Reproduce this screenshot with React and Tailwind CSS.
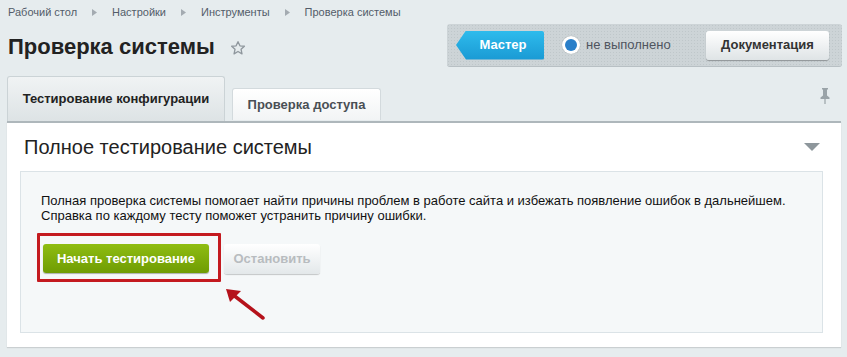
import React from 'react';

function Crumb({ children, last }) {
  return (
    <>
      <span className="text-[#535c69]">{children}</span>
      {!last && (
        <svg width="5" height="7" viewBox="0 0 5 7" className="mx-[15px]">
          <path d="M0 0 L5 3.5 L0 7 Z" fill="#a4abb1" />
        </svg>
      )}
    </>
  );
}

export default function App() {
  return (
    <div
      className="w-[847px] h-[357px] bg-[#e6ecee] overflow-hidden relative"
      style={{ fontFamily: '"Liberation Sans", Arial, sans-serif' }}
    >
      {/* breadcrumbs */}
      <div className="flex items-center pl-[8px] pt-[5px] h-[19px] text-[11px]">
        <Crumb>Рабочий стол</Crumb>
        <Crumb>Настройки</Crumb>
        <Crumb>Инструменты</Crumb>
        <Crumb last>Проверка системы</Crumb>
      </div>

      {/* title row */}
      <div className="flex items-start justify-between pl-[8px] pr-[5px] h-[57px]">
        <div className="flex items-center pt-[15px]">
          <h1 className="text-[22px] font-bold text-[#222] leading-[26px]">Проверка системы</h1>
          <svg width="16" height="16" viewBox="0 0 24 24" className="ml-[15px] mt-[1px]">
            <path
              d="M12 2.5l2.9 6.2 6.7.7-5 4.6 1.4 6.7L12 17.3l-5.9 3.4 1.4-6.7-5-4.6 6.7-.7z"
              fill="none"
              stroke="#8f979d"
              strokeWidth="2"
              strokeLinejoin="round"
            />
          </svg>
        </div>
        <div className="mt-[5px] w-[395px] h-[43px] rounded-[3px] bg-[#cdd4d7] border-b border-[#b8c0c4] flex items-center pl-[9px] pr-[13px]"
          style={{ backgroundImage: 'radial-gradient(#bfc7ca 1px, transparent 1px)', backgroundSize: '3px 3px' }}
        >
          <div className="relative h-[29px] w-[88px] flex items-center justify-center text-white font-bold text-[13px] rounded-r-[2px] bg-gradient-to-b from-[#2ebbec] to-[#1a9ad4] shadow-[0_1px_1px_rgba(0,0,0,0.25)]"
            style={{ clipPath: 'polygon(10px 0, 100% 0, 100% 100%, 10px 100%, 0 50%)' }}
          >
            <span className="pl-[6px]">Мастер</span>
          </div>
          <div className="ml-[18px] w-[18px] h-[18px] rounded-full bg-white flex items-center justify-center shadow-[0_0_1px_rgba(0,0,0,0.3)]">
            <div className="w-[12px] h-[12px] rounded-full bg-[#2a7fc9]" />
          </div>
          <span className="ml-[6px] text-[13px] text-[#4f5560]">не выполнено</span>
          <div className="ml-auto h-[29px] w-[123px] rounded-[3px] bg-gradient-to-b from-white to-[#dfe4e6] shadow-[0_1px_1px_rgba(0,0,0,0.3)] flex items-center justify-center text-[13px] font-bold text-[#333]">
            Документация
          </div>
        </div>
      </div>

      {/* tabs */}
      <div className="flex items-end pl-[7px] pr-[5px] h-[45px] relative">
        <div className="w-[218px] h-[45px] rounded-t-[3px] border border-b-0 border-[#cbd3d6] bg-gradient-to-b from-[#f0f3f4] to-[#dde3e5] flex items-center justify-center text-[13px] font-bold text-[#222]">
          Тестирование конфигурации
        </div>
        <div className="ml-[7px] mb-[1px] w-[149px] h-[32px] rounded-t-[3px] border border-b-0 border-[#d3dadd] bg-gradient-to-b from-white to-[#f2f4f5] flex items-center justify-center text-[13px] font-bold text-[#4a4f55]">
          Проверка доступа
        </div>
        <svg width="10" height="16" viewBox="0 0 10 16" className="absolute right-[17px] top-[12px]">
          <path d="M2 0h6v1.5H7v6l2.5 2V11h-9V9.5L3 7.5v-6H2z" fill="#9aa3a8" />
          <rect x="4.4" y="11" width="1.2" height="5" fill="#9aa3a8" />
        </svg>
      </div>

      {/* panel */}
      <div className="ml-[7px] mr-[6px] h-[226px] bg-white border-t-2 border-[#aeb7bb] shadow-[0_1px_1px_rgba(0,0,0,0.12)] pl-[13px] pr-[18px]">
        <div className="flex items-center justify-between h-[48px] pl-[4px] pr-[3px]">
          <span className="text-[20px] text-[#222]">Полное тестирование системы</span>
          <svg width="16" height="9" viewBox="0 0 16 9">
            <path d="M0 0h16L8 8z" fill="#8e979c" />
          </svg>
        </div>
        <div className="h-[162px] bg-[#f5f8f9] border border-[#dbe3e7] pt-[21px] pl-[20px]">
          <p className="text-[13px] leading-[15px] text-[#111]">
            Полная проверка системы помогает найти причины проблем в работе сайта и избежать появление ошибок в дальнейшем.
            <br />
            Справка по каждому тесту поможет устранить причину ошибки.
          </p>
          <div className="mt-[10px] flex items-start">
            <div className="relative -ml-[4px] pl-[3px] pr-[9px] pt-[8px] pb-[6px] border-[3px] border-[#c41a1f] rounded-[1px]">
              <div className="h-[29px] w-[166px] rounded-[3px] bg-gradient-to-b from-[#8fbd12] to-[#6f9c03] shadow-[0_1px_1px_rgba(0,0,0,0.3)] flex items-center justify-center text-white font-bold text-[13px]">
                Начать тестирование
              </div>
            </div>
            <div className="ml-[3px] mt-[11px] h-[30px] w-[96px] rounded-[3px] bg-gradient-to-b from-white to-[#e3e8ea] shadow-[0_1px_1px_rgba(0,0,0,0.2)] flex items-center justify-center text-[13px] font-bold text-[#b8bcbf]">
              Остановить
            </div>
          </div>
        </div>
      </div>

      {/* annotation arrow */}
      <svg width="50" height="40" viewBox="0 0 50 40" className="absolute left-[222px] top-[284px]">
        <line x1="41" y1="34" x2="10" y2="10" stroke="#b5121b" strokeWidth="3.5" strokeLinecap="round" />
        <path d="M4 5 L19 7 L8 18 Z" fill="#b5121b" />
      </svg>
    </div>
  );
}
